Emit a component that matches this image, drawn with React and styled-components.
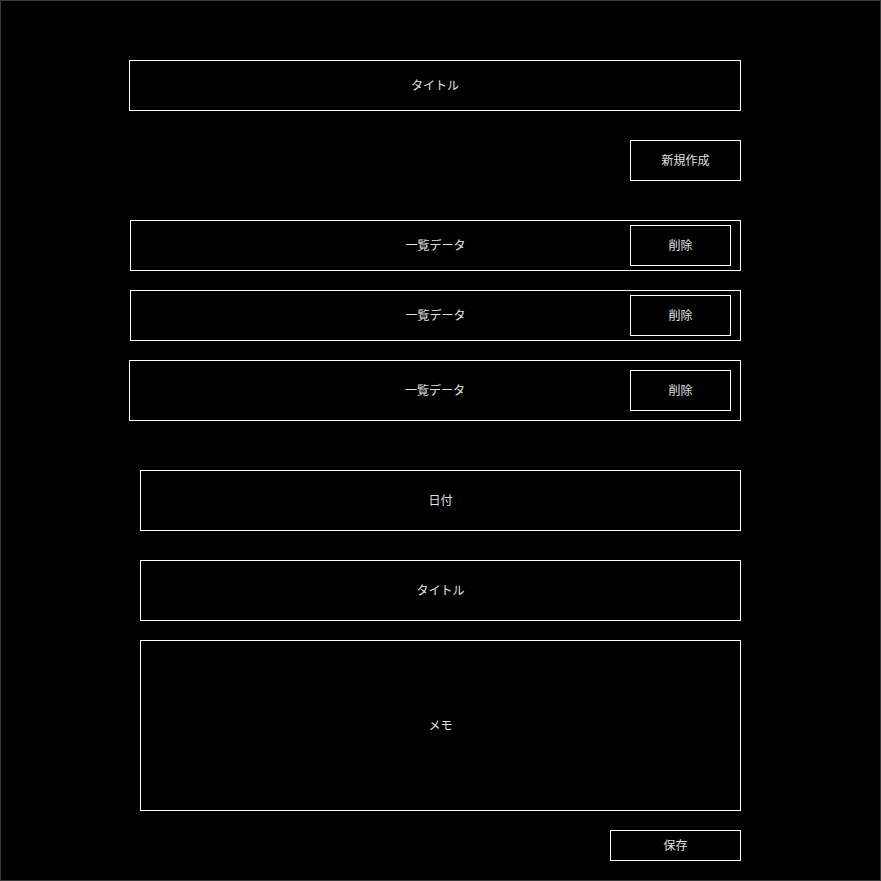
import React from 'react';
import styled, { createGlobalStyle } from 'styled-components';

const GlobalStyle = createGlobalStyle`
  html, body {
    margin: 0;
    padding: 0;
    background: #000;
  }
  * {
    box-sizing: border-box;
  }
`;

const items = ['一覧データ', '一覧データ', '一覧データ'];

export default function App() {
  return (
    <>
      <GlobalStyle />
      <Frame>
        <Column>
          <Box width={612} height={51}>タイトル</Box>
          <Button width={111} height={41} top={29}>新規作成</Button>

          <List>
            {items.map((item, i) => (
              <Row key={i} tall={i === items.length - 1}>
                <RowText>{item}</RowText>
                <DeleteButton>削除</DeleteButton>
              </Row>
            ))}
          </List>

          <Box width={601} height={61} top={49}>日付</Box>
          <Box width={601} height={61} top={29}>タイトル</Box>
          <Box width={601} height={171} top={19}>メモ</Box>
          <Button width={131} height={31} top={19}>保存</Button>
        </Column>
      </Frame>
    </>
  );
}

const Frame = styled.div`
  width: 881px;
  height: 881px;
  background: #000;
  border: 1px solid #3a3a3a;
  padding-top: 59px;
  font-family: "Noto Sans CJK JP", "Noto Sans", sans-serif;
  font-size: 12px;
  color: #e2e2e2;
`;

const Column = styled.div`
  width: 612px;
  margin-left: 128px;
  display: flex;
  flex-direction: column;
  align-items: flex-end;
`;

const Box = styled.div`
  width: ${({ width }) => width}px;
  height: ${({ height }) => height}px;
  margin-top: ${({ top }) => top || 0}px;
  border: 1px solid #fff;
  padding-bottom: 2px;
  display: flex;
  align-items: center;
  justify-content: center;
`;

const Button = styled(Box)``;

const List = styled.div`
  width: 612px;
  margin-top: 39px;
  display: flex;
  flex-direction: column;
  align-items: flex-end;
  gap: 19px;
`;

const Row = styled.div`
  width: ${({ tall }) => (tall ? 612 : 611)}px;
  height: ${({ tall }) => (tall ? 61 : 51)}px;
  border: 1px solid #fff;
  display: grid;
  grid-template-columns: 1fr auto 1fr;
  align-items: center;
  padding: 0 9px;
`;

const RowText = styled.span`
  grid-column: 2;
  text-align: center;
  padding-bottom: 2px;
`;

const DeleteButton = styled.div`
  grid-column: 3;
  justify-self: end;
  width: 101px;
  height: 41px;
  border: 1px solid #fff;
  padding-bottom: 2px;
  display: flex;
  align-items: center;
  justify-content: center;
`;
